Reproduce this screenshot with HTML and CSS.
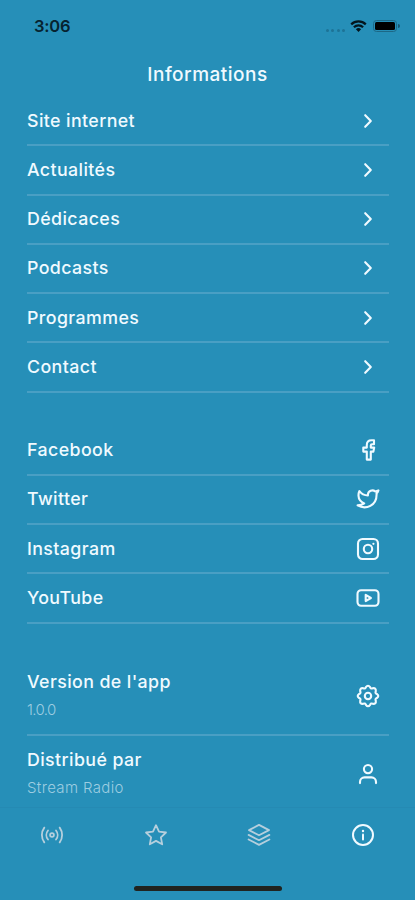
FILE: index.html
```html
<!DOCTYPE html>
<html lang="fr">
<head>
  <meta charset="UTF-8">
  <meta name="viewport" content="width=device-width, initial-scale=1.0">
  <title>Informations</title>
  <link rel="stylesheet" href="styles.css">
</head>
<body>
  <svg class="sprite" aria-hidden="true">
    <symbol id="chevron" viewBox="0 0 24 24"><path d="M9.2 6.2l5.6 5.8-5.6 5.8"/></symbol>
  </svg>

  <div class="status-bar">
    <span class="time">3:06</span>
    <div class="status-icons">
      <div class="signal"><i></i><i></i><i></i><i></i></div>
      <svg class="wifi" viewBox="0 0 17 12">
        <path d="M1.2 4.4a10.4 10.4 0 0 1 14.6 0M3.9 7.2a6.6 6.6 0 0 1 9.2 0"/>
        <path class="solid" d="M8.5 12l-2.6-2.7a3.8 3.8 0 0 1 5.2 0z"/>
      </svg>
      <div class="battery"><div class="battery-level"></div></div>
    </div>
  </div>

  <h1>Informations</h1>

  <main>
    <ul class="list">
      <li><span class="label">Site internet</span><svg class="icon"><use href="#chevron"/></svg></li>
      <li><span class="label">Actualités</span><svg class="icon"><use href="#chevron"/></svg></li>
      <li><span class="label">Dédicaces</span><svg class="icon"><use href="#chevron"/></svg></li>
      <li><span class="label">Podcasts</span><svg class="icon"><use href="#chevron"/></svg></li>
      <li><span class="label">Programmes</span><svg class="icon"><use href="#chevron"/></svg></li>
      <li><span class="label">Contact</span><svg class="icon"><use href="#chevron"/></svg></li>
    </ul>

    <ul class="list">
      <li>
        <span class="label">Facebook</span>
        <svg class="icon" viewBox="0 0 24 24"><path d="M18 2.2h-2.5c-3 0-4.7 1.9-4.7 4.7v2.7H7.3v4h3.5v8h4v-8h2.6l.8-4h-3.4V7.4c0-.8.4-1.2 1.2-1.2h2z"/></svg>
      </li>
      <li>
        <span class="label">Twitter</span>
        <svg class="icon" viewBox="0 0 24 24"><path d="M22.4 3.4a10.9 10.9 0 0 1-3.14 1.1 4.48 4.48 0 0 0-7.36 3v1A10.66 10.66 0 0 1 3.4 4s-4 8.6 4.8 12.4a11.64 11.64 0 0 1-6.6 2c8.6 4.8 19 0 19-11l-.08-.83a7.72 7.72 0 0 0 1.88-3.17z"/></svg>
      </li>
      <li>
        <span class="label">Instagram</span>
        <svg class="icon" viewBox="0 0 24 24"><rect x="2" y="2" width="20" height="20" rx="4.5"/><circle cx="12" cy="12" r="4.2"/><circle class="dot" cx="17.4" cy="6.8" r="1.1"/></svg>
      </li>
      <li>
        <span class="label">YouTube</span>
        <svg class="icon" viewBox="0 0 24 24"><rect x="1.5" y="4.3" width="21" height="15.4" rx="3.6"/><path d="M9.7 8.9v6.2l5.2-3.1z"/></svg>
      </li>
    </ul>

    <ul class="list details">
      <li>
        <div>
          <div class="label">Version de l'app</div>
          <div class="value version">1.0.0</div>
        </div>
        <svg class="icon" viewBox="0 0 24 24"><path d="M9.9 3.2Q12 .2 14.1 3.2Q14.8 5.2 16.7 4.2Q20.3 3.6 19.8 7.3Q18.8 9.2 20.8 9.9Q23.8 12 20.8 14.1Q18.8 14.8 19.8 16.7Q20.3 20.3 16.7 19.8Q14.8 18.8 14.1 20.8Q12 23.8 9.9 20.8Q9.2 18.8 7.3 19.8Q3.7 20.3 4.2 16.7Q5.2 14.8 3.2 14.1Q.2 12 3.2 9.9Q5.2 9.2 4.2 7.3Q3.7 3.6 7.3 4.2Q9.2 5.2 9.9 3.2z"/><circle cx="12" cy="12" r="3.2"/></svg>
      </li>
      <li>
        <div>
          <div class="label">Distribué par</div>
          <div class="value">Stream Radio</div>
        </div>
        <svg class="icon" viewBox="0 0 24 24"><circle cx="12" cy="7.1" r="4.1"/><path d="M4 21.1v-1.2a4.5 4.5 0 0 1 4.5-4.5h7a4.5 4.5 0 0 1 4.5 4.5v1.2"/></svg>
      </li>
    </ul>
  </main>

  <nav class="tab-bar">
    <div class="tab">
      <svg class="icon" viewBox="0 0 24 24"><circle cx="12" cy="12" r="1.9"/><path d="M8 7.5a7 7 0 0 0 0 9M16 7.5a7 7 0 0 1 0 9M4.3 4.6a12.6 12.6 0 0 0 0 14.8M19.7 4.6a12.6 12.6 0 0 1 0 14.8"/></svg>
    </div>
    <div class="tab">
      <svg class="icon" viewBox="0 0 24 24"><path d="M12 2.2l3 6.4 7 .9-5.1 4.8 1.3 7L12 17.9l-6.2 3.4 1.3-7L2 9.5l7-.9z"/></svg>
    </div>
    <div class="tab">
      <svg class="icon" viewBox="0 0 24 24"><path d="M12 1.9l10 5.2-10 5.2L2 7.1zM1.6 11.9L12 17.2l10.4-5.3M1.6 16.5L12 21.9l10.4-5.4"/></svg>
    </div>
    <div class="tab active">
      <svg class="icon" viewBox="0 0 24 24"><circle cx="12" cy="12" r="10"/><path d="M12 11.5v5"/><circle class="dot" cx="12" cy="8" r="1.2"/></svg>
    </div>
  </nav>

  <div class="home-indicator"></div>
</body>
</html>
```
FILE: styles.css
```css
* {
  margin: 0;
  padding: 0;
  box-sizing: border-box;
}

body {
  height: 900px;
  display: flex;
  flex-direction: column;
  overflow: hidden;
  background: #268fb8;
  color: #f0faff;
  font-family: Inter, 'Open Sans', sans-serif;
}

.sprite {
  display: none;
}

.status-bar {
  height: 52px;
  flex-shrink: 0;
  display: flex;
  align-items: center;
  justify-content: space-between;
  padding: 0 15px 0 34px;
  color: #062330;
}

.time {
  font-size: 16.5px;
  font-weight: 600;
  letter-spacing: -0.2px;
}

.status-icons {
  display: flex;
  align-items: center;
}

.signal {
  display: flex;
  gap: 2.4px;
  margin: 8px 5px 0 0;
}

.signal i {
  width: 3px;
  height: 3px;
  border-radius: 50%;
  background: #1d7396;
}

.wifi {
  width: 17px;
  height: 12px;
  margin-right: 6px;
  fill: none;
  stroke: #04151d;
  stroke-width: 2.2;
}

.wifi .solid {
  fill: #04151d;
  stroke: none;
}

.battery {
  position: relative;
  width: 24px;
  height: 12px;
  margin-right: 3px;
  padding: 1px;
  border: 1px solid #1c6886;
  border-radius: 3.5px;
}

.battery::after {
  content: '';
  position: absolute;
  right: -4px;
  top: 3px;
  width: 2px;
  height: 4px;
  border-radius: 0 2px 2px 0;
  background: #175874;
}

.battery-level {
  height: 100%;
  border-radius: 1.5px;
  background: #000;
}

h1 {
  height: 45px;
  flex-shrink: 0;
  line-height: 45px;
  text-align: center;
  font-size: 19px;
  font-weight: 500;
  letter-spacing: 0.5px;
}

main {
  flex: 1;
  min-height: 0;
  overflow: hidden;
  display: flex;
  flex-direction: column;
  gap: 34px;
  padding: 0 26px 0 27px;
}

.list {
  list-style: none;
}

.list li {
  display: flex;
  align-items: center;
  justify-content: space-between;
  height: 49.25px;
  padding-right: 9px;
  border-bottom: 2px solid #499fc4;
}

.list.details li {
  height: 78.2px;
}

.label {
  font-size: 17.8px;
  font-weight: 500;
  line-height: 26px;
  letter-spacing: 0.4px;
}

.value {
  margin-top: 3px;
  color: #9dcde1;
  font-size: 15px;
  font-weight: 300;
  line-height: 24px;
  letter-spacing: 0.35px;
}

.value.version {
  letter-spacing: -0.6px;
}

.icon {
  width: 24px;
  height: 24px;
  flex-shrink: 0;
  fill: none;
  stroke: currentColor;
  stroke-width: 2.1;
  stroke-linecap: round;
  stroke-linejoin: round;
}

.dot {
  fill: currentColor;
  stroke: none;
}

.tab-bar {
  height: 79px;
  flex-shrink: 0;
  display: flex;
  padding-top: 15px;
  border-top: 1px solid #258ab3;
}

.tab {
  flex: 1;
  display: flex;
  justify-content: center;
  color: #b5cfdd;
}

.tab .icon {
  stroke-width: 1.8;
}

.tab.active {
  color: #f0faff;
}

.tab.active .icon {
  stroke-width: 2;
}

.home-indicator {
  width: 148px;
  height: 5px;
  flex-shrink: 0;
  margin: 0 auto 9px;
  border-radius: 3px;
  background: #20231f;
}
```
